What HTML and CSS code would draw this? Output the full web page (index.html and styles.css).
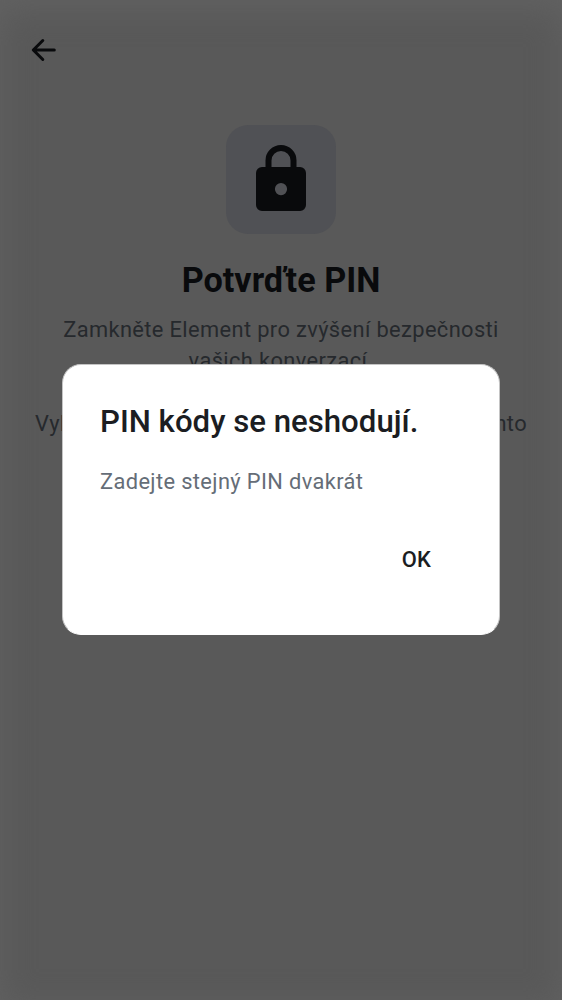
FILE: index.html
```html
<!DOCTYPE html>
<html lang="cs">
<head>
<meta charset="utf-8">
<title>Potvrďte PIN</title>
<link rel="stylesheet" href="styles.css">
</head>
<body>
<div class="screen">
  <header class="topbar">
    <svg class="back" viewBox="0 0 26 24" aria-label="Zpět"><path d="M23.300 12H3M11.800 2.500L2.300 12L11.800 21.500"/></svg>
  </header>
  <main class="content">
    <div class="badge">
      <svg class="lock" viewBox="0 0 50 66">
        <path class="shackle" d="M12.500 26V15.500a12.500 12.500 0 0 1 25 0V26"/>
        <path class="body" fill-rule="evenodd" d="M6 22H44a6 6 0 0 1 6 6V60a6 6 0 0 1-6 6H6a6 6 0 0 1-6-6V28a6 6 0 0 1 6-6ZM25 38a6.100 6.100 0 1 0 0 12.200a6.100 6.100 0 0 0 0-12.200Z"/>
      </svg>
    </div>
    <h1 class="title">Potvrďte PIN</h1>
    <p class="text">Zamkněte Element pro zvýšení bezpečnosti<br>vašich konverzací.</p>
    <p class="text">Vyberte si něco zapamatovatelného. Pokud tento</p>
  </main>
  <section class="dialog" role="dialog">
    <h2 class="dialog-title">PIN kódy se neshodují.</h2>
    <p class="dialog-text">Zadejte stejný PIN dvakrát</p>
    <div class="actions"><button class="ok">OK</button></div>
  </section>
</div>
</body>
</html>
```
FILE: styles.css
```css
* { box-sizing: border-box; }
body { margin: 0; font-family: Roboto, sans-serif; }
.screen {
  position: relative;
  width: 562px;
  height: 1000px;
  overflow: hidden;
  background: #595959;
  box-shadow: inset 0 8px 32px 0 #626262;
}
.topbar { height: 100px; padding: 38px 0 0 31px; }
.back {
  display: block;
  width: 26px;
  height: 24px;
  fill: none;
  stroke: #090a0c;
  stroke-width: 3;
  stroke-linecap: round;
  stroke-linejoin: round;
}
.content {
  display: flex;
  flex-direction: column;
  align-items: center;
  padding-top: 25px;
}
.badge {
  width: 110px;
  height: 109px;
  padding-top: 20px;
  border-radius: 22px;
  background: #505155;
}
.lock { display: block; width: 50px; height: 66px; margin: 0 auto; }
.shackle { fill: none; stroke: #090a0c; stroke-width: 6; }
.body { fill: #090a0c; }
.title {
  margin: 25px 0 12px;
  font-size: 34.2px;
  line-height: 43px;
  font-weight: 700;
  color: #090a0c;
}
.text {
  margin: 0 0 31.2px;
  font-size: 21.85px;
  line-height: 31.2px;
  letter-spacing: 0.37px;
  text-align: center;
  white-space: nowrap;
  color: #26292d;
}
.dialog {
  position: absolute;
  left: 62px;
  top: 364px;
  width: 438px;
  height: 271px;
  padding: 37px 37px 37px;
  border: 1px solid #c4c4c4;
  border-bottom-color: #fff;
  border-radius: 19px;
  background: #fff;
}
.dialog-title {
  margin: 0;
  font-size: 31.2px;
  line-height: 39px;
  font-weight: 500;
  color: #1b1d22;
}
.dialog-text {
  margin: 25px 0 0;
  font-size: 21.85px;
  line-height: 31.2px;
  letter-spacing: 0.37px;
  color: #656d77;
}
.actions { display: flex; justify-content: flex-end; margin-top: 37.5px; }
.ok {
  height: 50px;
  padding: 0 31px;
  border: 0;
  background: none;
  font: 500 21.9px/50px Roboto, sans-serif;
  letter-spacing: 0.16px;
  color: #1b1d22;
}
```
